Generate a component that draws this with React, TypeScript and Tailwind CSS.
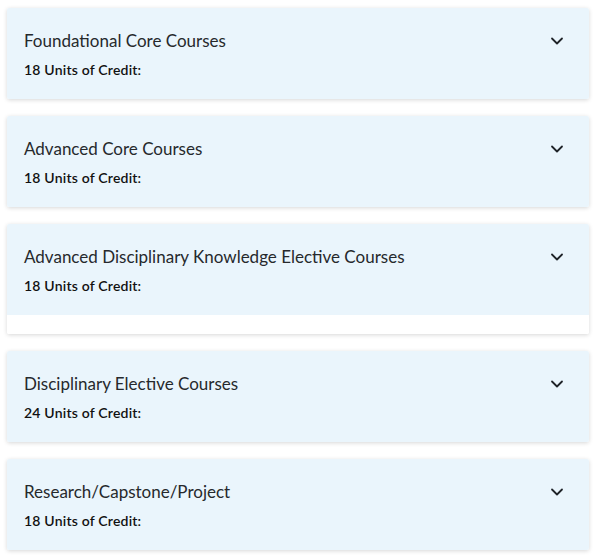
import { useState } from "react";

interface CourseGroup {
	title: string;
	units: number;
	open?: boolean;
}

const groups: CourseGroup[] = [
	{ title: "Foundational Core Courses", units: 18 },
	{ title: "Advanced Core Courses", units: 18 },
	{ title: "Advanced Disciplinary Knowledge Elective Courses", units: 18, open: true },
	{ title: "Disciplinary Elective Courses", units: 24 },
	{ title: "Research/Capstone/Project", units: 18 },
];

function Chevron() {
	return (
		<svg width="16" height="16" viewBox="0 0 16 16" fill="none">
			<path
				d="M3 5.5L8 10.5L13 5.5"
				stroke="#1f2328"
				strokeWidth="1.8"
				strokeLinecap="round"
				strokeLinejoin="round"
			/>
		</svg>
	);
}

function GroupCard({ group }: { group: CourseGroup }) {
	const [open, setOpen] = useState(!!group.open);

	return (
		<div className="rounded-[2px] bg-white shadow-[0_1px_4px_rgba(0,0,0,0.16)] overflow-hidden">
			<button
				type="button"
				onClick={() => setOpen(!open)}
				className="w-full text-left bg-[#eaf5fc] pl-[17px] pr-[24px] pt-[21px] pb-[19px]">
				<div className="flex items-center justify-between h-6">
					<span className="text-[17px] leading-6 text-[#26292c]">{group.title}</span>
					<Chevron />
				</div>
				<p className="mt-[7px] text-[14px] leading-5 font-semibold tracking-[0.2px] text-[#111]">
					{group.units} Units of Credit:
				</p>
			</button>
			{/* expanded panel body (no course rows loaded yet) */}
			{open && <div className="h-[19px] bg-white" />}
		</div>
	);
}

export default function App() {
	return (
		<div
			className="bg-white min-h-[556px] pl-[7px] pr-2 pt-2 flex flex-col gap-[17px]"
			style={{ fontFamily: "Lato, 'Noto Sans', sans-serif" }}>
			{groups.map((g) => (
				<GroupCard key={g.title} group={g} />
			))}
		</div>
	);
}
